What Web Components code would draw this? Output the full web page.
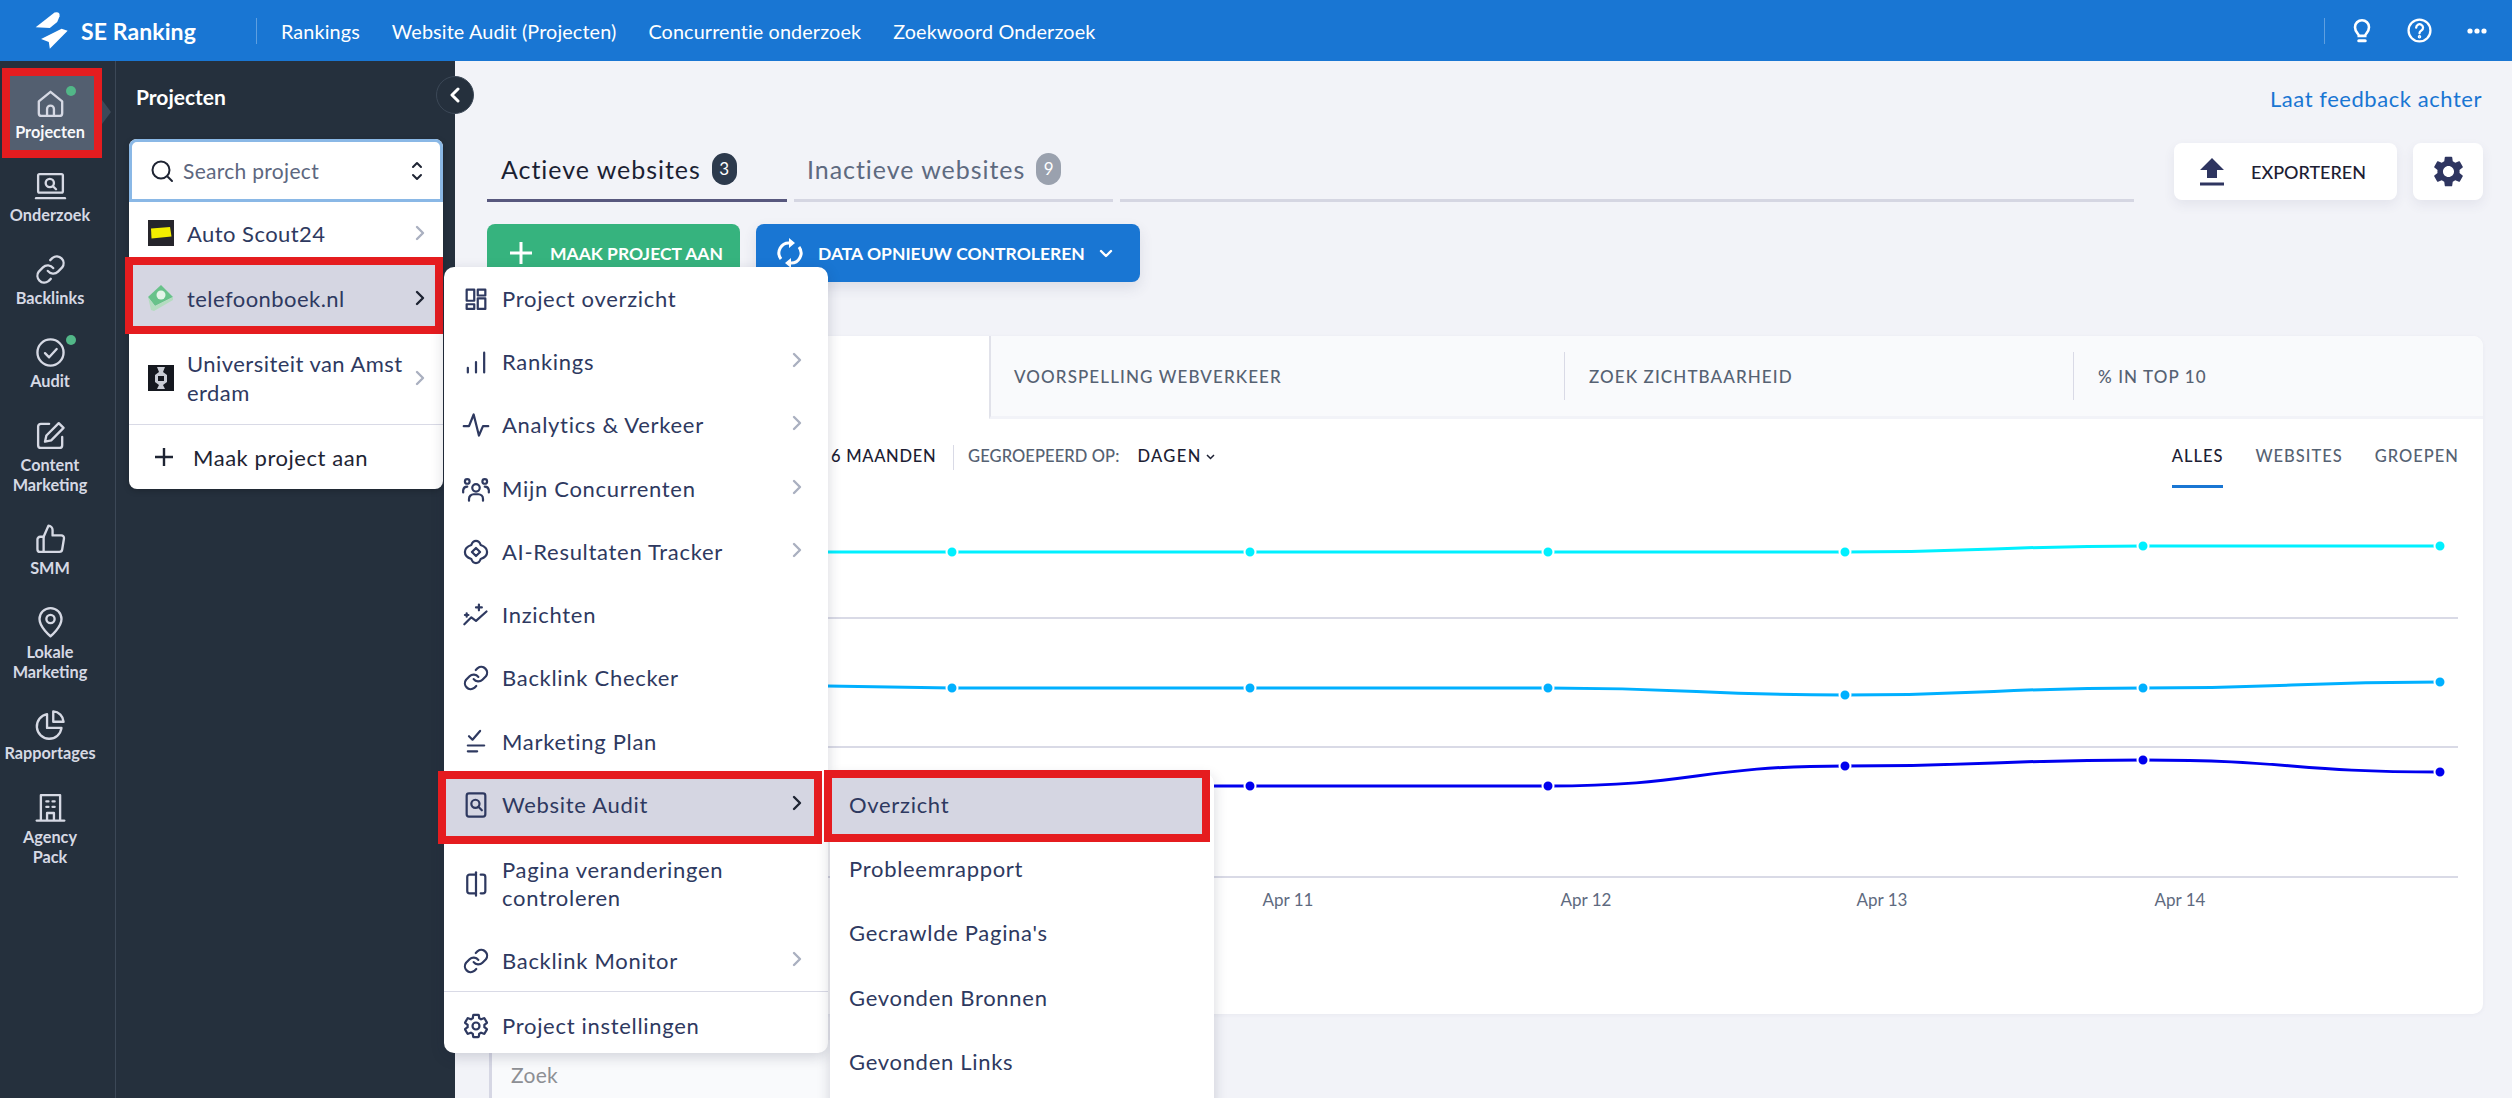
<!DOCTYPE html>
<html lang="nl">
<head>
<meta charset="utf-8">
<title>SE Ranking</title>
<style>
  html, body { margin: 0; height: 100%; overflow: hidden; background: #f2f3f8; font-family: Lato, "Liberation Sans", sans-serif; }
  .shell { display: flex; height: 1037px; }
</style>
</head>
<body>
<se-topbar></se-topbar>
<div class="shell">
  <se-rail>
    <rail-item icon="home" active dot style="--h:83px">Projecten</rail-item>
    <rail-item icon="laptop" style="--h:83px">Onderzoek</rail-item>
    <rail-item icon="link" style="--h:83px">Backlinks</rail-item>
    <rail-item icon="check" dot style="--h:83px">Audit</rail-item>
    <rail-item icon="edit" style="--h:104px;--lh:20px">Content<br>Marketing</rail-item>
    <rail-item icon="thumb" style="--h:83px">SMM</rail-item>
    <rail-item icon="pin" style="--h:102px;--lh:20px">Lokale<br>Marketing</rail-item>
    <rail-item icon="pie" style="--h:83px">Rapportages</rail-item>
    <rail-item icon="building" style="--h:100px;--lh:20px">Agency<br>Pack</rail-item>
  </se-rail>
  <se-panel>
    <project-row logo="scout" chevron style="--h:55px;--pad:7px">Auto Scout24</project-row>
    <project-row logo="book" chevron active style="--h:77px;--pad:5px">telefoonboek.nl</project-row>
    <project-row logo="uva" chevron style="--h:90px;--padb:3px">Universiteit van Amsterdam</project-row>
  </se-panel>
  <se-main></se-main>
</div>
<fly-menu class="main-menu" style="--left:444px;--top:267px;--width:384px;--bottom:1053px">
  <fly-item icon="grid">Project overzicht</fly-item>
  <fly-item icon="bars" chevron>Rankings</fly-item>
  <fly-item icon="pulse" chevron>Analytics &amp; Verkeer</fly-item>
  <fly-item icon="people" chevron>Mijn Concurrenten</fly-item>
  <fly-item icon="spark" chevron>AI-Resultaten Tracker</fly-item>
  <fly-item icon="insight">Inzichten</fly-item>
  <fly-item icon="link">Backlink Checker</fly-item>
  <fly-item icon="plan">Marketing Plan</fly-item>
  <fly-item icon="audit" chevron active>Website Audit</fly-item>
  <fly-item icon="compare" style="--h:94.600px">Pagina veranderingen<br>controleren</fly-item>
  <fly-item icon="link2" chevron style="--h:59.400px">Backlink Monitor</fly-item>
  <fly-item icon="gear" divider style="--h:70px">Project instellingen</fly-item>
</fly-menu>
<fly-menu class="sub-menu" style="--left:830px;--top:773px;--width:384px;--bottom:1120px">
  <fly-item sub active style="--h:64.200px">Overzicht</fly-item>
  <fly-item sub style="--h:64.200px">Probleemrapport</fly-item>
  <fly-item sub style="--h:64.200px">Gecrawlde Pagina's</fly-item>
  <fly-item sub style="--h:64.200px">Gevonden Bronnen</fly-item>
  <fly-item sub style="--h:64.200px">Gevonden Links</fly-item>
</fly-menu>

<script>
const GEAR_OUTER = 'M19.140 12.940c.04-.3.06-.61.06-.94 0-.32-.02-.64-.07-.94l2.030-1.580a.49.49 0 0 0 .12-.61l-1.920-3.320a.488.488 0 0 0-.59-.22l-2.390.96c-.5-.38-1.030-.7-1.620-.94l-.36-2.540a.484.484 0 0 0-.48-.41h-3.840c-.24 0-.43.17-.47.41l-.36 2.540c-.59.24-1.130.57-1.620.94l-2.390-.96c-.22-.08-.47 0-.59.22L2.740 8.870c-.12.21-.08.47.12.61l2.030 1.580c-.05.3-.09.63-.09.94s.02.64.07.94l-2.030 1.580a.49.49 0 0 0-.12.61l1.920 3.320c.12.22.37.29.59.22l2.390-.96c.5.38 1.030.7 1.620.94l.36 2.540c.05.24.24.41.48.41h3.840c.24 0 .44-.17.47-.41l.36-2.540c.59-.24 1.130-.56 1.620-.94l2.390.96c.22.08.47 0 .59-.22l1.920-3.320c.12-.22.07-.47-.12-.61l-2.010-1.580z';

const ICONS = {
  home: '<path d="M3.500 10.500 12 3.500l8.500 7V19a2 2 0 0 1-2 2h-13a2 2 0 0 1-2-2z"/><path d="M9.500 21v-5a2.500 2.500 0 0 1 5 0v5"/>',
  laptop: '<rect x="3" y="3" width="18" height="13.500" rx="1"/><path d="M1.500 20.500h21"/><circle cx="11.500" cy="9.500" r="3"/><path d="M14 12l2 2"/>',
  link: '<path d="M10 13a5 5 0 0 0 7.500.5l3-3a5 5 0 0 0-7-7l-1.700 1.700"/><path d="M14 11a5 5 0 0 0-7.500-.5l-3 3a5 5 0 0 0 7 7l1.700-1.700"/>',
  link2: '<path d="M10 13a5 5 0 0 0 7.500.5l3-3a5 5 0 0 0-7-7l-1.700 1.700"/><path d="M14 11a5 5 0 0 0-7.500-.5l-3 3a5 5 0 0 0 7 7l1.700-1.700"/>',
  check: '<circle cx="12" cy="12" r="9.500"/><path d="M8 12.500l3 3 5.500-6"/>',
  edit: '<path d="M11 3.500H5a2 2 0 0 0-2 2V19a2 2 0 0 0 2 2h13.500a2 2 0 0 0 2-2v-6"/><path d="M18 3l3.500 3.500L12.500 15.500l-4.500 1 1-4.500z"/>',
  thumb: '<path d="M13.500 9V5a3 3 0 0 0-3-3l-3.500 8v11h11.500a2 2 0 0 0 2-1.700l1.300-8a2 2 0 0 0-2-2.300z"/><path d="M7 21H4.500a2 2 0 0 1-2-2v-7a2 2 0 0 1 2-2H7"/>',
  pin: '<path d="M12 22s8-6.500 8-12.500a8 8 0 0 0-16 0C4 15.500 12 22 12 22z"/><circle cx="12" cy="9.500" r="3"/>',
  pie: '<path d="M20 14.500A9 9 0 1 1 9.500 4.500V14.500z"/><path d="M14 2.500a8 8 0 0 1 7.500 7.500H14z"/>',
  building: '<path d="M5 21V3h14v18"/><path d="M2 21.500h20"/><path d="M9.500 21v-5h5v5"/><path d="M9 7.500h1.500M13.500 7.500H15M9 11.500h1.500M13.500 11.500H15"/>',
  grid: '<rect x="4" y="4" width="6.500" height="9.500"/><rect x="13.500" y="4" width="6.500" height="5"/><rect x="4" y="16.500" width="6.500" height="4"/><rect x="13.500" y="11.500" width="6.500" height="9"/>',
  bars: '<path d="M5 21v-4M12 21v-9M19 21V4"/>',
  pulse: '<path d="M1.500 13h4.500L10 3l4.500 18 3.500-8h4.500"/>',
  people: '<circle cx="12" cy="11" r="3.200"/><circle cx="4.500" cy="5.500" r="2"/><circle cx="19.500" cy="5.500" r="2"/><path d="M6 22v-1.500a4 4 0 0 1 4-4h4a4 4 0 0 1 4 4V22"/><path d="M1 15v-2a3.500 3.500 0 0 1 3.500-3M23 15v-2a3.500 3.500 0 0 0-3.500-3"/>',
  spark: '<path d="M12 2.500c2.500 0 3.500 2 4 3.500 1.500.500 5.500 2 5.500 6s-4 5.500-5.500 6c-.500 1.500-1.500 3.500-4 3.500S8.500 19.500 8 18c-1.500-.500-5.500-2-5.500-6S6.500 6.500 8 6c.500-1.500 1.500-3.500 4-3.500z"/><path d="M12 8.500l3.500 3.500-3.500 3.500L8.500 12z"/>',
  insight: '<path d="M2 20l6-6 4 3 9-8"/><path d="M4 10.500v3M2.500 12h3M14.500 3v5M12 5.500h5"/>',
  plan: '<path d="M6 7l3 3 6.500-7.500"/><path d="M5 15h14M5 20h8"/>',
  audit: '<rect x="4" y="2" width="16" height="20" rx="2"/><circle cx="11.500" cy="11" r="3.500"/><path d="M14 13.500l3 3"/>',
  compare: '<path d="M12 2v20"/><path d="M12 4H6.500a2 2 0 0 0-2 2v12a2 2 0 0 0 2 2H12"/><path d="M16 4h2a2 2 0 0 1 2 2v12a2 2 0 0 1-2 2h-2"/>',
  gear: `<circle cx="12" cy="12" r="3"/><path d="${GEAR_OUTER}"/>`
};

function svgIcon(name, size, sw) {
  return `<svg width="${size}" height="${size}" viewBox="0 0 24 24" fill="none" stroke="currentColor" stroke-width="${sw}" stroke-linecap="round" stroke-linejoin="round">${ICONS[name]}</svg>`;
}

const CHEVRON = '<svg width="14" height="18" viewBox="0 0 14 18" fill="none" stroke="currentColor" stroke-width="2.400" stroke-linecap="round" stroke-linejoin="round"><path d="M4 3l6 6-6 6"/></svg>';

class SeTopbar extends HTMLElement {
  constructor() {
    super();
    this.attachShadow({ mode: 'open' });
    this.shadowRoot.innerHTML = `
      <style>
        :host { display: flex; align-items: center; height: 61px; background: #1976d3; color: #fff; font-size: 19.800px; }
        .logo { margin-left: 33px; width: 37px; height: 39px; flex: none; }
        .brand { margin-left: 11px; font-size: 23px; font-weight: 700; width: 175px; flex: none; white-space: nowrap; letter-spacing: .1px; }
        .sep { width: 1px; height: 26px; background: rgba(255,255,255,.3); flex: none; }
        nav { display: flex; gap: 32px; margin-left: 24px; letter-spacing: .13px; }
        .right { margin-left: auto; display: flex; align-items: center; }
        .btn { display: flex; justify-content: center; align-items: center; }
      </style>
      <svg class="logo" viewBox="100 30 110 115" fill="#fff"><path d="M108 78 164 34Q181 30 179 45L172 62 150 80Z"/><path d="M124 113 185 82 203 88 150 142 147 122Z"/></svg>
      <span class="brand">SE Ranking</span>
      <span class="sep"></span>
      <nav><span>Rankings</span><span>Website Audit (Projecten)</span><span>Concurrentie onderzoek</span><span>Zoekwoord Onderzoek</span></nav>
      <div class="right">
        <span class="sep"></span>
        <span class="btn" style="margin-left:24px;width:26px"><svg width="26" height="28" viewBox="0 0 24 26" fill="none" stroke="#fff" stroke-width="2.400" stroke-linecap="round"><path d="M9 17.500c0-2-3.500-3.500-3.500-8a6.500 6.500 0 0 1 13 0c0 4.500-3.500 6-3.500 8z"/><path d="M9 22h6" stroke-width="2.800"/></svg></span>
        <span class="btn" style="margin-left:31px;width:26px"><svg width="25" height="25" viewBox="0 0 24 24" fill="none" stroke="#fff" stroke-width="2.200" stroke-linecap="round"><circle cx="12" cy="12" r="10.500"/><path d="M8.800 9.300a3.300 3.300 0 1 1 5 2.800c-1.200.7-1.800 1.300-1.800 2.600"/><circle cx="12" cy="18" r=".6" fill="#fff"/></svg></span>
        <span class="btn" style="margin-left:32px;margin-right:22px;width:26px"><svg width="20" height="6" viewBox="0 0 20 6" fill="#fff"><circle cx="3" cy="3" r="2.600"/><circle cx="10" cy="3" r="2.600"/><circle cx="17" cy="3" r="2.600"/></svg></span>
      </div>
    `;
  }
}

class SeRail extends HTMLElement {
  constructor() {
    super();
    this.attachShadow({ mode: 'open' });
    this.shadowRoot.innerHTML = `
      <style>
        :host { display: flex; flex-direction: column; flex: none; box-sizing: border-box; width: 116px; padding-top: 28px; background: #25303d; border-right: 1px solid #3c4857; }
      </style>
      <slot></slot>
    `;
  }
}

class RailItem extends HTMLElement {
  constructor() {
    super();
    this.attachShadow({ mode: 'open' });
  }

  connectedCallback() {
    const active = this.hasAttribute('active');
    const dot = this.hasAttribute('dot');
    this.shadowRoot.innerHTML = `
      <style>
        :host { display: flex; flex-direction: column; align-items: center; position: relative; width: 100px; height: var(--h, 83px); color: #d6d9e4; font-size: 16.300px; font-weight: 700; text-align: center; }
        .ic { position: relative; width: 28px; height: 28px; display: flex; justify-content: center; align-items: center; }
        .ic svg { flex: none; }
        .lab { margin-top: 6px; line-height: var(--lh, 18px); position: relative; white-space: nowrap; }
        .dot { position: absolute; left: 66px; top: -3px; width: 10px; height: 10px; border-radius: 50%; background: #52b788; z-index: 1; }
        .mark { position: absolute; left: 10px; top: -13px; width: 84px; height: 74px; background: #535f70; box-shadow: 0 0 0 8px #e51c1f; }
        .tip { position: absolute; left: 102px; top: 11px; border-style: solid; border-width: 12px 0 12px 9px; border-color: transparent transparent transparent #3d4959; }
        :host([active]) .lab { color: #f7f8fb; }
      </style>
      ${active ? '<span class="mark"></span><span class="tip"></span>' : ''}
      ${dot ? '<span class="dot"></span>' : ''}
      <span class="ic">${svgIcon(this.getAttribute('icon'), 33, 1.7)}</span>
      <span class="lab"><slot></slot></span>
    `;
  }
}

class SePanel extends HTMLElement {
  constructor() {
    super();
    this.attachShadow({ mode: 'open' });
    this.shadowRoot.innerHTML = `
      <style>
        :host { display: block; flex: none; position: relative; width: 339px; background: #25303d; z-index: 2; }
        h2 { margin: 0; padding: 22px 0 0 20px; box-sizing: content-box; font-size: 21px; line-height: 28px; color: #fff; font-weight: 700; height: 34px; }
        .collapse { position: absolute; right: -19px; top: 15px; width: 38px; height: 38px; border-radius: 50%; background: #25303d; color: #fff; display: flex; justify-content: center; align-items: center; box-sizing: border-box; border: 1px solid #3c4857; }
        .card { margin: 22px 12px 0 13px; background: #fff; border-radius: 8px; overflow: visible; box-shadow: 0 2px 6px rgba(0,0,0,.2); }
        .search { display: flex; align-items: center; height: 63px; box-sizing: border-box; border: 3px solid #8ab8e6; border-radius: 8px 8px 0 0; padding: 0 16px 0 18px; color: #5d6780; font-size: 21px; letter-spacing: .3px; }
        .search span { margin-left: 9px; flex: 1; }
        .add { display: flex; align-items: center; height: 65px; box-sizing: border-box; border-top: 1px solid #d9dae6; padding-left: 25px; color: #1e2433; font-size: 22px; letter-spacing: .55px; }
        .add span { margin-left: 19px; }
      </style>
      <h2>Projecten</h2>
      <div class="collapse"><svg width="10" height="16" viewBox="0 0 10 16" fill="none" stroke="#fff" stroke-width="3" stroke-linecap="round" stroke-linejoin="round"><path d="M8 2 2 8l6 6"/></svg></div>
      <div class="card">
        <div class="search">
          <svg width="24" height="24" viewBox="0 0 24 24" fill="none" stroke="#1e2433" stroke-width="2" stroke-linecap="round"><circle cx="11" cy="11" r="8.500"/><path d="M18 18l4 4"/></svg>
          <span>Search project</span>
          <svg width="14" height="22" viewBox="0 0 14 22" fill="none" stroke="#1e2433" stroke-width="2" stroke-linecap="round" stroke-linejoin="round"><path d="M3 7l4-4 4 4M3 15l4 4 4-4"/></svg>
        </div>
        <slot></slot>
        <div class="add">
          <svg width="20" height="20" viewBox="0 0 20 20" stroke="#1e2433" stroke-width="2.400"><path d="M10 1v18M1 10h18"/></svg>
          <span>Maak project aan</span>
        </div>
      </div>
    `;
  }
}

const LOGOS = {
  scout: '<rect width="26" height="26" fill="#26252b"/><path d="M3 8.500l19-1.500 1.500 9.500-20 2z" fill="#f4ee00"/>',
  book: '<path d="M0 12 13 0 25 12 7 21z" fill="#68c28a"/><path d="M0 12 7 21 25 12v3L6 26 3 25z" fill="#b4dcc0"/><circle cx="13" cy="10" r="4.500" fill="#e4f4e9"/>',
  uva: '<rect width="26" height="26" fill="#15181f"/><path d="M9 2h8l-2 5 4 3v7l-4 3 2 4H9l2-4-4-3v-7l4-3z" fill="#c9ccd4"/><rect x="10" y="11" width="6" height="5" fill="#15181f"/>'
};

class ProjectRow extends HTMLElement {
  constructor() {
    super();
    this.attachShadow({ mode: 'open' });
  }

  connectedCallback() {
    const logo = LOGOS[this.getAttribute('logo')];
    this.shadowRoot.innerHTML = `
      <style>
        :host { display: flex; align-items: center; position: relative; box-sizing: border-box; height: var(--h, 55px); padding: var(--pad, 0) 0 var(--padb, 0) 19px; color: #2e3960; font-size: 22px; line-height: 29px; letter-spacing: .45px; }
        svg { position: relative; flex: none; }
        .txt { position: relative; margin-left: 13px; width: 222px; word-break: break-all; }
        .chev { position: relative; margin-left: 4px; color: #aab0c0; display: flex; }
        :host([active]) .chev { color: #1e2433; }
        .mark { position: absolute; left: -4px; right: 0; top: 0; bottom: 0; background: #d5d6e2; border: 8px solid #e51c1f; }
        :host([active]) { z-index: 1; }
      </style>
      ${this.hasAttribute('active') ? '<span class="mark"></span>' : ''}
      <svg width="26" height="26" viewBox="0 0 26 26">${logo}</svg>
      <span class="txt"><slot></slot></span>
      <span class="chev">${CHEVRON}</span>
    `;
  }
}

class FlyMenu extends HTMLElement {
  constructor() {
    super();
    this.attachShadow({ mode: 'open' });
    this.shadowRoot.innerHTML = `
      <style>
        :host { display: block; position: absolute; left: var(--left); top: var(--top); width: var(--width); height: calc(var(--bottom) - var(--top)); box-sizing: border-box; background: #fff; border-radius: 10px; box-shadow: 0 4px 14px rgba(30,36,60,.18); z-index: 3; }
      </style>
      <slot></slot>
    `;
  }
}

class FlyItem extends HTMLElement {
  constructor() {
    super();
    this.attachShadow({ mode: 'open' });
  }

  connectedCallback() {
    const icon = this.getAttribute('icon');
    const sub = this.hasAttribute('sub');
    this.shadowRoot.innerHTML = `
      <style>
        :host { display: flex; align-items: center; position: relative; box-sizing: border-box; height: var(--h, 63.300px); padding-left: ${sub ? 19 : 18}px; color: #2e3960; font-size: 22px; line-height: 28px; letter-spacing: .7px; }
        :host([divider]) { border-top: 1px solid #d9dae6; }
        .ic { position: relative; flex: none; width: 28px; height: 28px; margin-right: 12px; }
        .txt { position: relative; flex: 1; white-space: nowrap; }
        .chev { position: relative; margin-right: 24px; margin-top: -4px; color: #aab0c0; display: flex; }
        :host([active]) .chev { color: #1e2433; }
        .mark { position: absolute; background: #d5d6e2; border: 8px solid #e51c1f; }
      </style>
      ${this.hasAttribute('active') ? `<span class="mark" style="${sub ? 'left:-6px;right:4px;top:-3px;bottom:-5px' : 'left:-6px;right:6px;top:-2px;bottom:-7px'}"></span>` : ''}
      ${icon ? `<span class="ic">${svgIcon(icon, 28, 1.9)}</span>` : ''}
      <span class="txt"><slot></slot></span>
      ${this.hasAttribute('chevron') ? `<span class="chev">${CHEVRON}</span>` : ''}
    `;
  }
}

class SeMain extends HTMLElement {
  constructor() {
    super();
    this.attachShadow({ mode: 'open' });
    this.shadowRoot.innerHTML = `
      <style>
        :host { display: block; flex: 1; min-width: 0; box-sizing: border-box; padding: 24px 29px 0 32px; background: #f2f3f8; overflow: hidden; }
        .feedback { text-align: right; height: 28px; line-height: 28px; font-size: 22px; color: #1976d3; margin-right: 1px; letter-spacing: .55px; }
        .tabs { display: flex; margin-top: 30px; height: 59px; }
        .tab { box-sizing: border-box; border-bottom: 3px solid #d5d6e2; margin-right: 7px; height: 59px; display: flex; align-items: center; padding-bottom: 5px; font-size: 25px; letter-spacing: .95px; color: #5e6a80; }
        .tab.on { width: 300px; border-color: #58587e; color: #1b1f33; padding-left: 14px; }
        .tab.off { width: 319px; padding-left: 13px; }
        .tab.fill { flex: 1; margin-right: 40px; }
        .badge { margin-left: 11px; width: 25px; height: 32px; border-radius: 13px; background: #2d3a4d; color: #fff; font-size: 17px; letter-spacing: 0; display: flex; justify-content: center; align-items: center; }
        .off .badge { background: #9aa1ae; }
        .card-btn { height: 57px; box-sizing: border-box; background: #fff; border-radius: 8px; box-shadow: 0 5px 12px rgba(60,65,100,.08); display: flex; align-items: center; color: #1c2033; }
        .export { width: 223px; margin-right: 16px; padding-left: 26px; font-size: 18px; font-weight: 500; }
        .export svg { margin-right: 27px; }
        .gear { width: 70px; justify-content: center; }
        .actions { display: flex; gap: 16px; margin-top: 22px; }
        .act { height: 58px; border-radius: 8px; color: #fff; display: flex; align-items: center; box-sizing: border-box; font-size: 17.500px; font-weight: 700; white-space: nowrap; }
        .green { width: 253px; background: #36b37e; padding-left: 23px; }
        .green svg { margin-right: 18px; }
        .blue { width: 384px; background: #1976d3; padding-left: 21px; box-shadow: 0 6px 14px rgba(60,65,100,.12); }
        .blue .t { margin: 0 14px 0 15px; }
        .bottom { margin-top: 26px; margin-left: 2px; width: 712px; height: 70px; background: #f9fafc; border-left: 3px solid #d6d7e4; border-radius: 6px; box-sizing: border-box; padding: 22px 0 0 19px; font-size: 21px; color: #8d8f94; letter-spacing: .3px; }
      </style>
      <div class="feedback">Laat feedback achter</div>
      <div class="tabs">
        <div class="tab on">Actieve websites<span class="badge">3</span></div>
        <div class="tab off">Inactieve websites<span class="badge">9</span></div>
        <div class="tab fill"></div>
        <div class="card-btn export">
          <svg width="24" height="28" viewBox="0 0 24 28" fill="#2e3560"><path d="M12 0 24 12H17V20H7V12H0Z"/><rect y="24.500" width="24" height="3"/></svg>
          <span>EXPORTEREN</span>
        </div>
        <div class="card-btn gear">
          <svg width="37" height="37" viewBox="0 0 24 24"><path fill="#2e3560" fill-rule="evenodd" d="${GEAR_OUTER}M12 15.600c-1.980 0-3.600-1.620-3.600-3.600s1.620-3.600 3.600-3.600 3.600 1.620 3.600 3.600-1.620 3.600-3.600 3.600z"/></svg>
        </div>
      </div>
      <div class="actions">
        <div class="act green">
          <svg width="22" height="22" viewBox="0 0 22 22" stroke="#fff" stroke-width="3"><path d="M11 0v22M0 11h22"/></svg>
          <span>MAAK PROJECT AAN</span>
        </div>
        <div class="act blue">
          <svg width="26" height="32" viewBox="0 0 26 32" fill="none" stroke="#fff" stroke-width="3"><path d="M4 22A10 10 0 0 1 13 6"/><path d="M22 10a10 10 0 0 1-9 16"/><path d="M12 1v10l6-5zM14 31V21l-6 5z" fill="#fff" stroke="none"/></svg>
          <span class="t">DATA OPNIEUW CONTROLEREN</span>
          <svg width="14" height="9" viewBox="0 0 14 9" fill="none" stroke="#fff" stroke-width="2.400" stroke-linecap="round" stroke-linejoin="round"><path d="M2 2l5 5 5-5"/></svg>
        </div>
      </div>
      <chart-card></chart-card>
      <div class="bottom">Zoek</div>
    `;
  }
}

class ChartCard extends HTMLElement {
  constructor() {
    super();
    this.attachShadow({ mode: 'open' });
  }

  connectedCallback() {
    // point x is relative to the card, y to the svg
    const xs = [465, 763, 1061, 1358, 1656, 1953];
    const top = 500;
    const series = [
      { color: '#00f0ff', ys: [552, 552, 552, 552, 546, 546], start: 552 },
      { color: '#00b0ff', ys: [688, 688, 688, 695, 688, 682], start: 686 },
      { color: '#0000ee', ys: [786, 786, 786, 766, 760, 772], start: 786, from: 1 }
    ];
    const lines = series.map(s => {
      const pts = xs.map((x, i) => [x, s.ys[i] - top]);
      let d = s.from ? `M${pts[1][0] - 200} ${pts[1][1]}L${pts[1][0]} ${pts[1][1]}` : `M340 ${s.start - top}L${pts[0][0]} ${pts[0][1]}`;
      for (let i = s.from ? 2 : 1; i < pts.length; i++) {
        const mid = (pts[i - 1][0] + pts[i][0]) / 2;
        d += `C${mid} ${pts[i - 1][1]} ${mid} ${pts[i][1]} ${pts[i][0]} ${pts[i][1]}`;
      }
      const dots = pts.slice(s.from || 0).map(p => `<circle cx="${p[0]}" cy="${p[1]}" r="5.500" fill="${s.color}" stroke="#fff" stroke-width="2"/>`).join('');
      return `<path d="${d}" fill="none" stroke="${s.color}" stroke-width="3"/>${dots}`;
    }).join('');
    const grid = [618, 747, 877].map(y => `<path d="M0 ${y - top}H1971" stroke="#d9dae6" stroke-width="2"/>`).join('');
    const dates = [['Apr 11', 801], ['Apr 12', 1099], ['Apr 13', 1395], ['Apr 14', 1693]]
      .map(d => `<text x="${d[1]}" y="406" text-anchor="middle" font-family="Lato, sans-serif" font-size="17" fill="#5e6a80">${d[0]}</text>`).join('');

    this.shadowRoot.innerHTML = `
      <style>
        :host { display: block; margin-top: 54px; height: 678px; background: #fff; border-radius: 10px; box-shadow: 0 1px 4px rgba(60,65,100,.05); overflow: hidden; }
        .kpis { display: grid; grid-template-columns: 502px 575px 509px 1fr; height: 83px; font-size: 17px; font-weight: 500; color: #566273; letter-spacing: 1.100px; }
        .kpi { display: flex; align-items: center; background: #f9fafc; border-bottom: 3px solid #f2f3f8; box-sizing: border-box; position: relative; padding-left: 25px; }
        .kpi.first { background: #fff; border: 0; }
        .kpi.k1 { border-left: 2px solid #e1e2ea; padding-left: 23px; }
        .kpi.k2::before, .kpi.k3::before { content: ""; position: absolute; left: 0; top: 16px; height: 48px; width: 1px; background: #d9dae6; }
        .filters { display: flex; height: 81px; font-size: 16.500px; font-weight: 500; color: #566273; letter-spacing: .1px; }
        .period { padding: 27px 0 0 344px; color: #1c2033; width: 107px; line-height: 20px; letter-spacing: .7px; white-space: nowrap; }
        .by { margin: 26px 0 0 15px; padding-left: 14px; border-left: 1px solid #d9dae6; height: 24px; display: flex; align-items: flex-start; line-height: 20px; padding-top: 1px; white-space: pre; }
        .by b { color: #1c2033; font-weight: 500; margin-left: 18px; letter-spacing: 1.400px; }
        .by svg { margin: 8px 0 0 4px; }
        .views { margin-left: auto; margin-right: 24px; display: flex; gap: 32px; line-height: 20px; padding-top: 27px; letter-spacing: 1px; }
        .views span { height: 42px; box-sizing: border-box; }
        .views .on { color: #1c2033; border-bottom: 3px solid #1976d3; }
        svg.plot { display: block; }
      </style>
      <div class="kpis">
        <div class="kpi first"></div>
        <div class="kpi k1">VOORSPELLING WEBVERKEER</div>
        <div class="kpi k2">ZOEK ZICHTBAARHEID</div>
        <div class="kpi k3">% IN TOP 10</div>
      </div>
      <div class="filters">
        <div class="period">6 MAANDEN</div>
        <div class="by">GEGROEPEERD OP:<b>DAGEN</b><svg width="9" height="6" viewBox="0 0 9 6" fill="none" stroke="#1c2033" stroke-width="1.500"><path d="M1 1l3.500 3.500L8 1"/></svg></div>
        <div class="views"><span class="on">ALLES</span><span>WEBSITES</span><span>GROEPEN</span></div>
      </div>
      <svg class="plot" width="1996" height="514" viewBox="0 0 1996 514">${grid}${lines}${dates}</svg>
    `;
  }
}

customElements.define('se-topbar', SeTopbar);
customElements.define('se-rail', SeRail);
customElements.define('rail-item', RailItem);
customElements.define('se-panel', SePanel);
customElements.define('project-row', ProjectRow);
customElements.define('fly-menu', FlyMenu);
customElements.define('fly-item', FlyItem);
customElements.define('se-main', SeMain);
customElements.define('chart-card', ChartCard);
</script>
</body>
</html>
